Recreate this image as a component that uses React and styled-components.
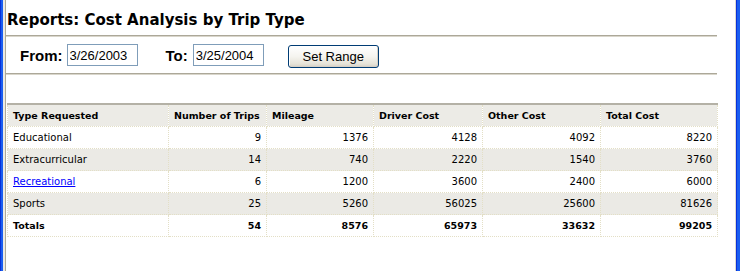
import React from "react";
import styled, { createGlobalStyle } from "styled-components";

const Global = createGlobalStyle`
  html, body { margin: 0; padding: 0; background: #fff; }
  body { font-family: "DejaVu Sans", Verdana, sans-serif; }
`;

const Frame = styled.div`
  display: flex;
  width: 740px;
  height: 271px;
  overflow: hidden;
`;

const LeftEdge = styled.div`
  flex: 0 0 5px;
  background: linear-gradient(
    to right,
    #0831d9 0,
    #0831d9 1px,
    #1a5df0 1px,
    #1a5df0 3px,
    #eceae2 3px,
    #eceae2 5px
  );
`;

const RightEdge = styled.div`
  flex: 0 0 5px;
  background: linear-gradient(
    to right,
    #dcd9cf 0,
    #dcd9cf 1px,
    #0831d9 1px,
    #0831d9 2px,
    #1a5df0 2px,
    #1a5df0 5px
  );
`;

const Page = styled.div`
  flex: 1;
  background: #fff;
  border-left: 1px solid #aca899;
`;

const Main = styled.div`
  width: 711px;
  display: flex;
  flex-direction: column;
`;

const Title = styled.h1`
  margin: 0;
  padding: 11px 0 6px 1px;
  font-family: "DejaVu Sans", Verdana, sans-serif;
  font-weight: bold;
  font-size: 15px;
  line-height: 18px;
  color: #000;
  white-space: nowrap;
`;

const Rule = styled.div`
  height: 0;
  border-top: 1px solid #aca899;
  border-bottom: 1px solid #d9d6cb;
`;

const RangeBar = styled.form`
  display: flex;
  align-items: center;
  height: 36px;
  padding-left: 14px;
  margin: 0;
`;

const Label = styled.label`
  font-family: "Liberation Sans", Arial, sans-serif;
  font-weight: bold;
  font-size: 15px;
  color: #000;
  margin-left: ${(p) => p.$offset || 0}px;
  margin-right: ${(p) => p.$gap || 4}px;
`;

const DateInput = styled.input`
  box-sizing: border-box;
  width: 71px;
  height: 22px;
  border: 1px solid #7f9db9;
  padding: 0 2px;
  margin: 0;
  font-family: "Liberation Sans", Arial, sans-serif;
  font-size: 13px;
  color: #000;
  background: #fff;
  outline: none;
`;

const Button = styled.button`
  box-sizing: border-box;
  width: 91px;
  height: 23px;
  margin: 2px 0 0 24px;
  padding: 0;
  border: 1px solid #003c74;
  border-radius: 3px;
  background: linear-gradient(#ffffff 0%, #f5f4ef 50%, #e6e3d8 85%, #d6d0c5 100%);
  box-shadow: inset -1px -1px 0 #d6d0c5, inset 1px 1px 0 #fff;
  font-family: "Liberation Sans", Arial, sans-serif;
  font-size: 13px;
  color: #000;
  cursor: pointer;
`;

const Table = styled.table`
  margin: 28px 0 0 1px;
  width: 710px;
  table-layout: fixed;
  border-collapse: collapse;
  border-top: 2px solid #b4b1a6;
  font-family: "DejaVu Sans", Verdana, sans-serif;
  color: #000;
`;

const Row = styled.tr`
  background: ${(p) => (p.$shaded ? "#ebeae5" : "#fff")};
`;

const HeadCell = styled.th`
  height: 21px;
  padding: 0 5px;
  text-align: left;
  font-weight: bold;
  font-size: 9.5px;
  background: #ecebe6;
  border: 1px dotted #e3dfc6;
  border-top: none;
  white-space: nowrap;
  overflow: hidden;
`;

const Cell = styled.td`
  height: 21px;
  padding: 0 5px;
  text-align: ${(p) => (p.$num ? "right" : "left")};
  font-weight: ${(p) => (p.$bold ? "bold" : "normal")};
  font-size: ${(p) => (p.$bold ? "9.5px" : "10px")};
  border: 1px dotted #e3dfc6;
  white-space: nowrap;
`;

const Link = styled.a`
  color: #0000ff;
  text-decoration: underline;
`;

const columns = [
  { title: "Type Requested", width: 161 },
  { title: "Number of Trips", width: 98 },
  { title: "Mileage", width: 107 },
  { title: "Driver Cost", width: 109 },
  { title: "Other Cost", width: 118 },
  { title: "Total Cost", width: 117 },
];

const rows = [
  ["Educational", 9, 1376, 4128, 4092, 8220],
  ["Extracurricular", 14, 740, 2220, 1540, 3760],
  ["Recreational", 6, 1200, 3600, 2400, 6000, true],
  ["Sports", 25, 5260, 56025, 25600, 81626],
];

const totals = ["Totals", 54, 8576, 65973, 33632, 99205];

export default function App() {
  return (
    <>
      <Global />
      <Frame>
        <LeftEdge />
        <Page>
          <Main>
            <Title>Reports: Cost Analysis by Trip Type</Title>
            <Rule />
            <RangeBar onSubmit={(e) => e.preventDefault()}>
              <Label htmlFor="from">From:</Label>
              <DateInput id="from" defaultValue="3/26/2003" />
              <Label htmlFor="to" $offset={28} $gap={5}>
                To:
              </Label>
              <DateInput id="to" defaultValue="3/25/2004" />
              <Button type="button">Set Range</Button>
            </RangeBar>
            <Rule />
            <Table>
              <colgroup>
                {columns.map((c) => (
                  <col key={c.title} style={{ width: c.width }} />
                ))}
              </colgroup>
              <thead>
                <tr>
                  {columns.map((c) => (
                    <HeadCell key={c.title}>{c.title}</HeadCell>
                  ))}
                </tr>
              </thead>
              <tbody>
                {rows.map((r, i) => (
                  <Row key={r[0]} $shaded={i % 2 === 1}>
                    <Cell>{r[6] ? <Link href="#">{r[0]}</Link> : r[0]}</Cell>
                    {r.slice(1, 6).map((v, j) => (
                      <Cell key={j} $num>
                        {v}
                      </Cell>
                    ))}
                  </Row>
                ))}
                <Row>
                  <Cell $bold>{totals[0]}</Cell>
                  {totals.slice(1).map((v, j) => (
                    <Cell key={j} $num $bold>
                      {v}
                    </Cell>
                  ))}
                </Row>
              </tbody>
            </Table>
          </Main>
        </Page>
        <RightEdge />
      </Frame>
    </>
  );
}
